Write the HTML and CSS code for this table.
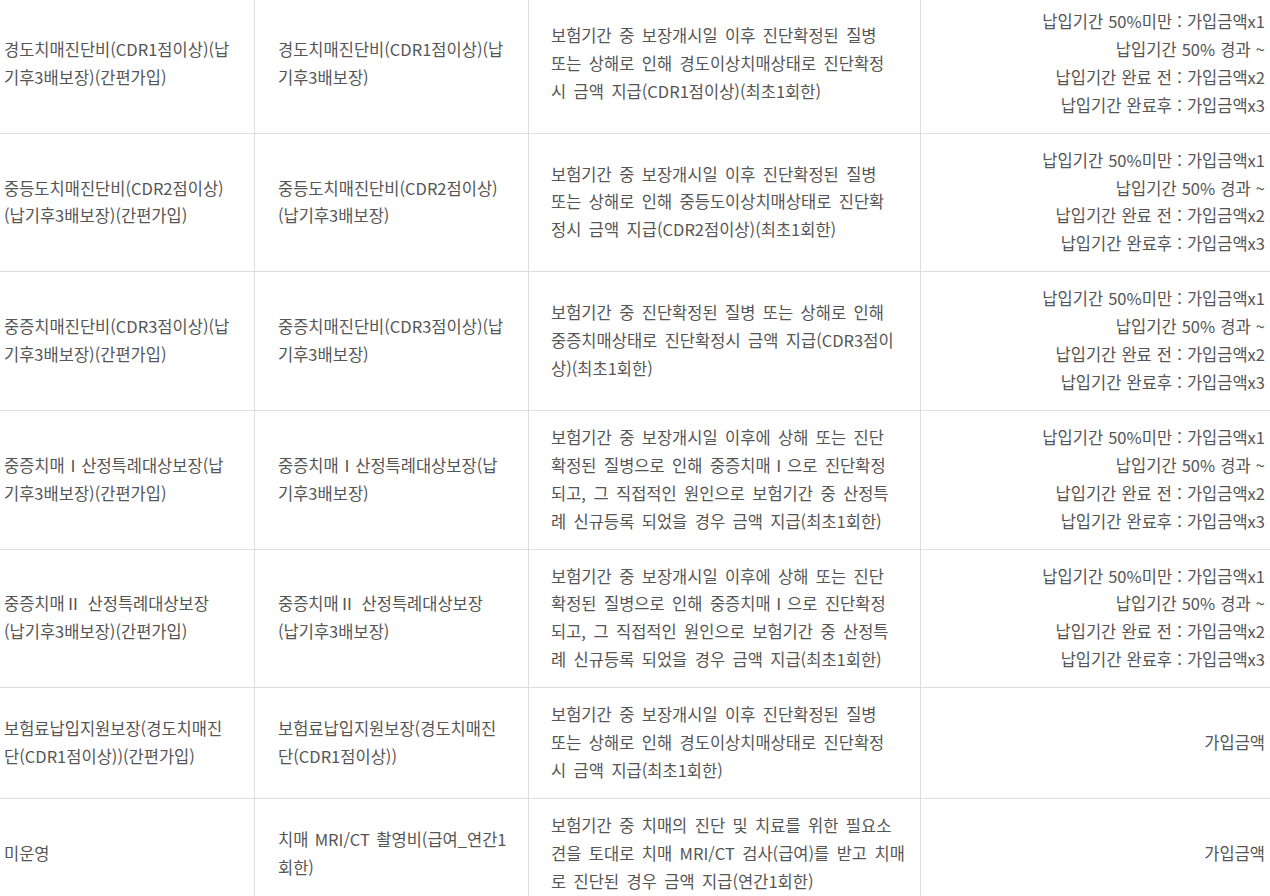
FILE: index.html
```html
<!DOCTYPE html>
<html lang="ko">
<head>
    <meta charset="UTF-8">
    <title>보장내용</title>
    <meta name="viewport" content="width=device-width, initial-scale=1.0">
    <link rel="stylesheet" href="styles.css">
</head>
<body>
    <div class="coverage-wrap">
        <table class="coverage-table">
            <colgroup>
                <col class="col-name">
                <col class="col-rider">
                <col class="col-desc">
                <col class="col-amount">
            </colgroup>
            <tbody>
                <tr>
                    <td>경도치매진단비(CDR1점이상)(납<br>기후3배보장)(간편가입)</td>
                    <td>경도치매진단비(CDR1점이상)(납<br>기후3배보장)</td>
                    <td class="desc">보험기간 중 보장개시일 이후 진단확정된 질병<br>또는 상해로 인해 경도이상치매상태로 진단확정<br>시 금액 지급(CDR1점이상)(최초1회한)</td>
                    <td class="amount">납입기간 50%미만 : 가입금액x1<br>납입기간 50% 경과 ~<br>납입기간 완료 전 : 가입금액x2<br>납입기간 완료후 : 가입금액x3</td>
                </tr>
                <tr>
                    <td>중등도치매진단비(CDR2점이상)<br>(납기후3배보장)(간편가입)</td>
                    <td>중등도치매진단비(CDR2점이상)<br>(납기후3배보장)</td>
                    <td class="desc">보험기간 중 보장개시일 이후 진단확정된 질병<br>또는 상해로 인해 중등도이상치매상태로 진단확<br>정시 금액 지급(CDR2점이상)(최초1회한)</td>
                    <td class="amount">납입기간 50%미만 : 가입금액x1<br>납입기간 50% 경과 ~<br>납입기간 완료 전 : 가입금액x2<br>납입기간 완료후 : 가입금액x3</td>
                </tr>
                <tr>
                    <td>중증치매진단비(CDR3점이상)(납<br>기후3배보장)(간편가입)</td>
                    <td>중증치매진단비(CDR3점이상)(납<br>기후3배보장)</td>
                    <td class="desc">보험기간 중 진단확정된 질병 또는 상해로 인해<br>중증치매상태로 진단확정시 금액 지급(CDR3점이<br>상)(최초1회한)</td>
                    <td class="amount">납입기간 50%미만 : 가입금액x1<br>납입기간 50% 경과 ~<br>납입기간 완료 전 : 가입금액x2<br>납입기간 완료후 : 가입금액x3</td>
                </tr>
                <tr>
                    <td>중증치매Ⅰ산정특례대상보장(납<br>기후3배보장)(간편가입)</td>
                    <td>중증치매Ⅰ산정특례대상보장(납<br>기후3배보장)</td>
                    <td class="desc">보험기간 중 보장개시일 이후에 상해 또는 진단<br>확정된 질병으로 인해 중증치매Ⅰ으로 진단확정<br>되고, 그 직접적인 원인으로 보험기간 중 산정특<br>례 신규등록 되었을 경우 금액 지급(최초1회한)</td>
                    <td class="amount">납입기간 50%미만 : 가입금액x1<br>납입기간 50% 경과 ~<br>납입기간 완료 전 : 가입금액x2<br>납입기간 완료후 : 가입금액x3</td>
                </tr>
                <tr>
                    <td>중증치매Ⅱ 산정특례대상보장<br>(납기후3배보장)(간편가입)</td>
                    <td>중증치매Ⅱ 산정특례대상보장<br>(납기후3배보장)</td>
                    <td class="desc">보험기간 중 보장개시일 이후에 상해 또는 진단<br>확정된 질병으로 인해 중증치매Ⅰ으로 진단확정<br>되고, 그 직접적인 원인으로 보험기간 중 산정특<br>례 신규등록 되었을 경우 금액 지급(최초1회한)</td>
                    <td class="amount">납입기간 50%미만 : 가입금액x1<br>납입기간 50% 경과 ~<br>납입기간 완료 전 : 가입금액x2<br>납입기간 완료후 : 가입금액x3</td>
                </tr>
                <tr>
                    <td>보험료납입지원보장(경도치매진<br>단(CDR1점이상))(간편가입)</td>
                    <td>보험료납입지원보장(경도치매진<br>단(CDR1점이상))</td>
                    <td class="desc">보험기간 중 보장개시일 이후 진단확정된 질병<br>또는 상해로 인해 경도이상치매상태로 진단확정<br>시 금액 지급(최초1회한)</td>
                    <td class="amount">가입금액</td>
                </tr>
                <tr>
                    <td>미운영</td>
                    <td>치매 MRI/CT 촬영비(급여_연간1<br>회한)</td>
                    <td class="desc">보험기간 중 치매의 진단 및 치료를 위한 필요소<br>견을 토대로 치매 MRI/CT 검사(급여)를 받고 치매<br>로 진단된 경우 금액 지급(연간1회한)</td>
                    <td class="amount">가입금액</td>
                </tr>
            </tbody>
        </table>
    </div>
</body>
</html>
```

FILE: styles.css
```css
html, body {
    margin: 0;
    padding: 0;
    overflow: hidden;
    background: #fff;
}
body {
    font-family: "Noto Sans CJK KR", "Noto Sans", sans-serif;
    font-size: 16.5px;
    line-height: 27.9px;
    color: #555;
}
.coverage-wrap {
    margin: -6px 0 0 -20px;
}
.coverage-table {
    border-collapse: collapse;
    table-layout: fixed;
    width: 1308px;
}
.col-name { width: 274px; }
.col-rider { width: 274px; }
.col-desc { width: 392px; }
.col-amount { width: 368px; }
.coverage-table td {
    border: 1px solid #ddd;
    padding: 13px 23px;
    vertical-align: middle;
    text-align: left;
    white-space: nowrap;
    word-spacing: 1.7px;
}
.coverage-table td.desc {
    padding: 13px 22px;
    word-spacing: 2.8px;
}
.coverage-table td.amount {
    text-align: right;
    word-spacing: 0.5px;
}
```
